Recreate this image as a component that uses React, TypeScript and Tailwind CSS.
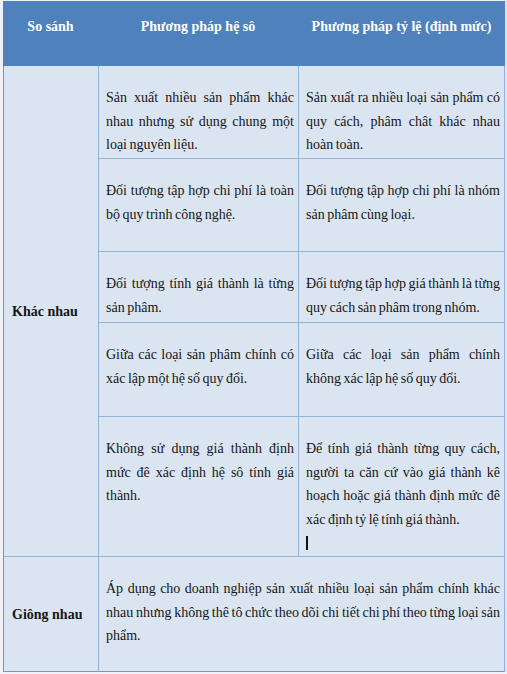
import React from "react";

const body = "text-[14px] leading-[23.5px] text-[#161616] text-justify [word-spacing:-1px] pt-[20px] pl-[7px] pr-[4px]";

export default function App() {
  return (
    <div className="w-[507px] h-[674px] bg-[#eef2f8] pl-[3px] pt-[1px] font-['Liberation_Serif',serif] overflow-hidden">
      <div className="grid grid-cols-[95px_200px_207px] grid-rows-[65px_93px_93px_71px_94px_140px_115px] bg-[#dbe5f1]">
        {/* header */}
        <div className="bg-[#4f81bd] text-white font-bold text-[14px] leading-[23.5px] pt-[14px] text-center">So sánh</div>
        <div className="bg-[#4f81bd] text-white font-bold text-[14px] leading-[23.5px] pt-[14px] text-center">Phương pháp hệ sô</div>
        <div className="bg-[#4f81bd] text-white font-bold text-[14px] leading-[23.5px] pt-[14px] text-center">Phương pháp tỷ lệ (định mức)</div>

        {/* Khác nhau */}
        <div className="row-span-5 border-l border-b border-l-[#7395c9] border-b-[#95b3d7] flex items-center pl-[8px] text-[14px] font-bold text-[#161616]">
          Khác nhau
        </div>

        <div className={`border-l border-b border-[#95b3d7] ${body}`}>
          Sản xuất nhiều sản phẩm khác nhau nhưng sử dụng chung một loại nguyên liệu.
        </div>
        <div className={`border-l border-b border-r border-[#95b3d7] ${body}`}>
          Sản xuất ra nhiều loại sản phẩm có quy cách, phâm chât khác nhau hoàn toàn.
        </div>

        <div className={`border-l border-b border-[#95b3d7] ${body}`}>
          Đối tượng tập hợp chi phí là toàn bộ quy trình công nghệ.
        </div>
        <div className={`border-l border-b border-r border-[#95b3d7] ${body}`}>
          Đối tượng tập hợp chi phí là nhóm sản phâm cùng loại.
        </div>

        <div className={`border-l border-b border-[#95b3d7] ${body}`}>
          Đối tượng tính giá thành là từng sản phâm.
        </div>
        <div className={`border-l border-b border-r border-[#95b3d7] ${body}`}>
          Đối tượng tập hợp giá thành là từng quy cách sản phâm trong nhóm.
        </div>

        <div className={`border-l border-b border-[#95b3d7] ${body}`}>
          Giữa các loại sản phâm chính có xác lập một hệ số quy đổi.
        </div>
        <div className={`border-l border-b border-r border-[#95b3d7] ${body}`}>
          Giữa các loại sản phẩm chính không xác lập hệ số quy đổi.
        </div>

        <div className={`border-l border-b border-[#95b3d7] ${body}`}>
          Không sử dụng giá thành định mức đê xác định hệ sô tính giá thành.
        </div>
        <div className={`border-l border-b border-r border-[#95b3d7] ${body}`}>
          <div>
            Để tính giá thành từng quy cách, người ta căn cứ vào giá thành kê hoạch hoặc giá thành định mức đê xác định tỷ lệ tính giá thành.
          </div>
          <div className="h-[23.5px] flex items-center">
            <span className="inline-block w-[2px] h-[14px] bg-[#111]" />
          </div>
        </div>

        {/* Giống nhau */}
        <div className="border-l border-b border-l-[#7395c9] border-b-[#7395c9] flex items-center pl-[8px] text-[14px] font-bold text-[#161616]">
          Giông nhau
        </div>
        <div className={`col-span-2 border-l border-b border-r border-[#95b3d7] border-b-[#7395c9] ${body}`}>
          Áp dụng cho doanh nghiệp sản xuất nhiều loại sản phẩm chính khác nhau nhưng không thê tô chức theo dõi chi tiết chi phí theo từng loại sản phẩm.
        </div>
      </div>
    </div>
  );
}
